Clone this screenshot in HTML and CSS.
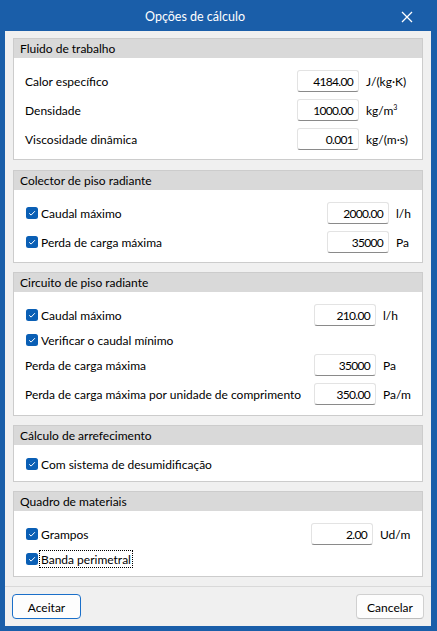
FILE: index.html
```html
<!DOCTYPE html>
<html lang="pt">
<head>
<meta charset="utf-8">
<title>Opções de cálculo</title>
<link rel="stylesheet" href="styles.css">
</head>
<body>
<div class="window">
  <div class="titlebar">
    <span class="title">Opções de cálculo</span>
    <svg class="close" width="12" height="12" viewBox="0 0 12 12"><path d="M1 1 L11 11 M11 1 L1 11" stroke="#fff" stroke-width="1.3" fill="none"/></svg>
  </div>
  <div class="content">
    <section class="group g1">
      <div class="group-head">Fluido de trabalho</div>
      <div class="group-body">
        <div class="row"><span class="label">Calor específico</span><span class="field">4184.00</span><span class="unit">J/(kg·K)</span></div>
        <div class="row"><span class="label">Densidade</span><span class="field">1000.00</span><span class="unit">kg/m<sup>3</sup></span></div>
        <div class="row"><span class="label">Viscosidade dinâmica</span><span class="field">0.001</span><span class="unit">kg/(m·s)</span></div>
      </div>
    </section>
    <section class="group g2">
      <div class="group-head">Colector de piso radiante</div>
      <div class="group-body">
        <div class="row"><span class="label check"><svg class="box" width="12" height="12" viewBox="0 0 12 12"><rect width="12" height="12" rx="2.5" fill="#0a5fb5"/><path d="M3.2 6.3 L5.1 8.1 L8.9 4.2" stroke="#fff" stroke-width="1" fill="none"/></svg><span>Caudal máximo</span></span><span class="field">2000.00</span><span class="unit">l/h</span></div>
        <div class="row"><span class="label check"><svg class="box" width="12" height="12" viewBox="0 0 12 12"><rect width="12" height="12" rx="2.5" fill="#0a5fb5"/><path d="M3.2 6.3 L5.1 8.1 L8.9 4.2" stroke="#fff" stroke-width="1" fill="none"/></svg><span>Perda de carga máxima</span></span><span class="field">35000</span><span class="unit">Pa</span></div>
      </div>
    </section>
    <section class="group g3">
      <div class="group-head">Circuito de piso radiante</div>
      <div class="group-body">
        <div class="row"><span class="label check"><svg class="box" width="12" height="12" viewBox="0 0 12 12"><rect width="12" height="12" rx="2.5" fill="#0a5fb5"/><path d="M3.2 6.3 L5.1 8.1 L8.9 4.2" stroke="#fff" stroke-width="1" fill="none"/></svg><span>Caudal máximo</span></span><span class="field">210.00</span><span class="unit">l/h</span></div>
        <div class="row short"><span class="label check"><svg class="box" width="12" height="12" viewBox="0 0 12 12"><rect width="12" height="12" rx="2.5" fill="#0a5fb5"/><path d="M3.2 6.3 L5.1 8.1 L8.9 4.2" stroke="#fff" stroke-width="1" fill="none"/></svg><span>Verificar o caudal mínimo</span></span></div>
        <div class="row"><span class="label">Perda de carga máxima</span><span class="field">35000</span><span class="unit">Pa</span></div>
        <div class="row"><span class="label">Perda de carga máxima por unidade de comprimento</span><span class="field">350.00</span><span class="unit">Pa/m</span></div>
      </div>
    </section>
    <section class="group g4">
      <div class="group-head">Cálculo de arrefecimento</div>
      <div class="group-body">
        <div class="row short"><span class="label check"><svg class="box" width="12" height="12" viewBox="0 0 12 12"><rect width="12" height="12" rx="2.5" fill="#0a5fb5"/><path d="M3.2 6.3 L5.1 8.1 L8.9 4.2" stroke="#fff" stroke-width="1" fill="none"/></svg><span>Com sistema de desumidificação</span></span></div>
      </div>
    </section>
    <section class="group g5">
      <div class="group-head">Quadro de materiais</div>
      <div class="group-body">
        <div class="row"><span class="label check"><svg class="box" width="12" height="12" viewBox="0 0 12 12"><rect width="12" height="12" rx="2.5" fill="#0a5fb5"/><path d="M3.2 6.3 L5.1 8.1 L8.9 4.2" stroke="#fff" stroke-width="1" fill="none"/></svg><span>Grampos</span></span><span class="field">2.00</span><span class="unit">Ud/m</span></div>
        <div class="row short"><span class="label check"><svg class="box" width="12" height="12" viewBox="0 0 12 12"><rect width="12" height="12" rx="2.5" fill="#0a5fb5"/><path d="M3.2 6.3 L5.1 8.1 L8.9 4.2" stroke="#fff" stroke-width="1" fill="none"/></svg><span class="focus">Banda perimetral</span></span></div>
      </div>
    </section>
  </div>
  <div class="footer">
    <button class="btn primary">Aceitar</button>
    <button class="btn">Cancelar</button>
  </div>
</div>
</body>
</html>
```
FILE: styles.css
```css
* { box-sizing: border-box; }
html, body { margin: 0; padding: 0; }
body {
  width: 437px;
  height: 631px;
  overflow: hidden;
  font-family: "Lato", "Noto Sans", sans-serif;
  font-size: 12px;
  color: #000;
  background: #1a5ea9;
}
.window {
  width: 437px;
  height: 631px;
  display: flex;
  flex-direction: column;
  padding: 0 6px 5px 5px;
  background: #1a5ea9;
}
.titlebar {
  height: 31px;
  flex: none;
  display: flex;
  align-items: center;
  justify-content: center;
  position: relative;
  color: #fff;
}
.title { font-size: 12.5px; margin-right: 46px; padding-top: 1px; }
.close { position: absolute; right: 18px; top: 11px; }
.content {
  flex: 1;
  background: #f0f0f0;
  padding: 7px 8px 9px 8px;
  display: flex;
  flex-direction: column;
  gap: 9px;
}
.group {
  border: 1px solid #cccccc;
  background: #fff;
}
.g2 { margin-top: 1px; }
.group-head {
  height: 19px;
  line-height: 19px;
  background: #d9d9d9;
  padding-left: 6px;
}
.group-body {
  padding: 8px 0 7px 11px;
}
.g1 .group-body, .g2 .group-body { padding-bottom: 6px; }
.row {
  height: 29px;
  display: flex;
  align-items: center;
}
.row.short { height: 21px; }
.label { flex: 1; white-space: nowrap; padding-top: 2px; }
.check { display: flex; align-items: center; margin-left: 1px; padding-top: 0; }
.check > span { padding-top: 2px; }
.box { flex: none; margin-right: 3px; }
.check > .focus { outline: 1px dotted #000; outline-offset: 0; padding: 1px 1px 0 1px; margin-left: -1px; line-height: 15px; }
.field {
  width: 62px;
  height: 22px;
  flex: none;
  background: #fff;
  border: 1px solid #e3e3e3;
  border-bottom-color: #8a8a8a;
  border-radius: 3px;
  text-align: right;
  padding-right: 5px;
  padding-top: 1px;
  line-height: 19px;
  letter-spacing: -0.7px;
}
.unit { flex: none; margin-left: 7px; white-space: nowrap; padding-top: 2px; }
.unit sup { font-size: 7px; vertical-align: 5px; line-height: 0; }
.g1 .unit { width: 56px; }
.g2 .unit { width: 26px; }
.g3 .unit { width: 39px; }
.g5 .unit { width: 42px; }
.footer {
  flex: none;
  height: 40px;
  background: #f0f0f0;
  border-top: 1px solid #d9d9d9;
  padding: 7px 7px 7px 7px;
  display: flex;
  justify-content: space-between;
}
.btn {
  font-family: inherit;
  font-size: 12px;
  color: #000;
  height: 25px;
  background: #fdfdfd;
  border: 1px solid #d0d0d0;
  border-bottom-color: #bdbdbd;
  border-radius: 4px;
  padding: 1px 0 0 0;
}
.btn.primary { width: 69px; border: 1px solid #1a6fc9; }
.btn:not(.primary) { width: 68px; }
```
